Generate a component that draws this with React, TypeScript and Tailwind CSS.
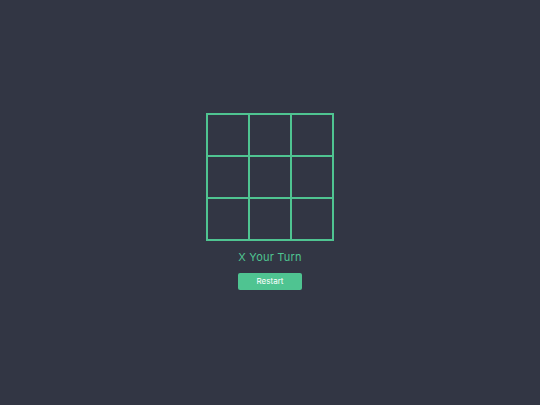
export default function App() {
  const cells = Array.from({ length: 9 })

  return (
    <div className="min-h-screen w-full bg-[#323644] flex flex-col items-center justify-center pb-[3px] font-['Inter',sans-serif]">
      {/* Board */}
      <div className="grid grid-cols-3 gap-[2px] p-[2px] bg-[#4fc491]">
        {cells.map((_, i) => (
          <div key={i} className="w-[40px] h-[40px] bg-[#323644]" />
        ))}
      </div>

      <p className="mt-[9px] text-[11px] leading-[14px] text-[#4fc491] tracking-[0.2px]">X Your Turn</p>

      <button className="mt-[9px] w-[64px] h-[17px] rounded-[2px] bg-[#4fc491] text-white text-[8px] leading-none">
        Restart
      </button>
    </div>
  )
}
